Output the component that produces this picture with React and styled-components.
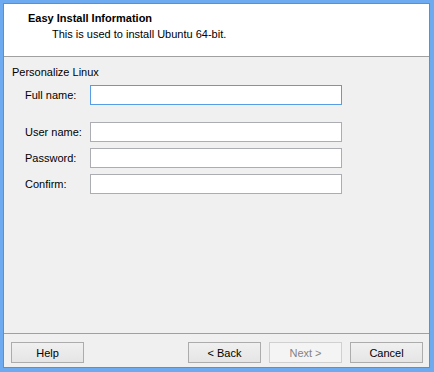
import React from 'react';
import styled, {createGlobalStyle} from 'styled-components';

const GlobalStyle = createGlobalStyle`
html, body {
  margin: 0;
  padding: 0;
  background: #6eaaf0;
}
body {
  font-family: "Liberation Sans", Arial, sans-serif;
  font-size: 11px;
  color: #000;
}
`

const fields = [
  {label: 'Full name:', focused: true, gapAfter: true},
  {label: 'User name:'},
  {label: 'Password:'},
  {label: 'Confirm:'},
];

function App() {
  return (
    <>
      <GlobalStyle />
      <Frame>
        <Window>
          <Header>
            <Title>Easy Install Information</Title>
            <Subtitle>This is used to install Ubuntu 64-bit.</Subtitle>
          </Header>

          <Body>
            <GroupLabel>Personalize Linux</GroupLabel>
            <Form>
              {fields.map((f) => (
                <Row key={f.label} $gapAfter={f.gapAfter}>
                  <Label>{f.label}</Label>
                  <Input $focused={f.focused} type={f.label.startsWith('Pass') || f.label.startsWith('Conf') ? 'password' : 'text'} />
                </Row>
              ))}
            </Form>
          </Body>

          <Footer>
            <Button>Help</Button>
            <Spacer />
            <ButtonGroup>
              <Button>&lt; Back</Button>
              <Button disabled>Next &gt;</Button>
              <Button $last>Cancel</Button>
            </ButtonGroup>
          </Footer>
        </Window>
      </Frame>
    </>
  )
}

export default App

const Frame = styled.div`
width: 434px;
height: 372px;
box-sizing: border-box;
border-style: solid;
border-color: #6eaaf0;
border-width: 3px 4px 4px 3px;
background: #6eaaf0;
`

const Window = styled.div`
height: 100%;
box-sizing: border-box;
border: 1px solid #5b90d0;
background: #f0f0f0;
display: flex;
flex-direction: column;
`

const Header = styled.div`
height: 53px;
box-sizing: border-box;
background: #fff;
border-bottom: 1px solid #a0a0a0;
padding: 8px 0 0 24px;
flex-shrink: 0;
`

const Title = styled.div`
font-weight: bold;
line-height: 13px;
`

const Subtitle = styled.div`
line-height: 13px;
margin-top: 3px;
padding-left: 24px;
`

const Body = styled.div`
flex: 1;
padding: 9px 0 0 8px;
`

const GroupLabel = styled.div`
line-height: 13px;
`

const Form = styled.div`
display: flex;
flex-direction: column;
gap: 6px;
padding-top: 6px;
padding-left: 13px;
`

const Row = styled.div`
display: flex;
align-items: center;
margin-bottom: ${p => p.$gapAfter ? '11px' : '0'};
`

const Label = styled.div`
width: 65px;
line-height: 13px;
`

const Input = styled.input`
width: 252px;
height: 20px;
box-sizing: border-box;
margin: 0;
padding: 0 3px;
border: 1px solid ${p => p.$focused ? '#569de5' : '#abadb3'};
background: #fff;
outline: none;
font: inherit;
`

const Footer = styled.div`
height: 34px;
box-sizing: border-box;
border-top: 1px solid #a0a0a0;
display: flex;
align-items: flex-start;
padding: 8px 6px 0 7px;
flex-shrink: 0;
`

const Spacer = styled.div`
flex: 1;
`

const ButtonGroup = styled.div`
display: flex;
gap: 8px;
`

const Button = styled.button`
width: 73px;
height: 21px;
box-sizing: border-box;
margin: 0;
padding: 0;
border: 1px solid #acacac;
background: linear-gradient(#f0f0f0, #e5e5e5);
font-family: "Liberation Sans", Arial, sans-serif;
font-size: 11px;
color: #000;

&:disabled{
  border-color: #d0d0d0;
  background: #f4f4f4;
  color: #838383;
}
`
